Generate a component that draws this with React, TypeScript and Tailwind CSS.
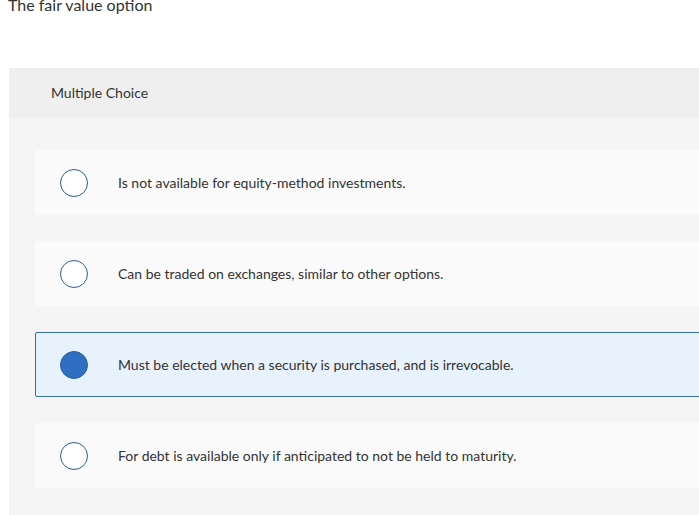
const options = [
  { text: 'Is not available for equity-method investments.', selected: false },
  { text: 'Can be traded on exchanges, similar to other options.', selected: false },
  { text: 'Must be elected when a security is purchased, and is irrevocable.', selected: true },
  { text: 'For debt is available only if anticipated to not be held to maturity.', selected: false },
]

function Radio({ checked }: { checked: boolean }) {
  return (
    <span
      className={
        checked
          ? 'h-[28px] w-[28px] shrink-0 rounded-full border-[1.5px] border-[#2a5f9a] bg-[#2f6fc2]'
          : 'h-[28px] w-[28px] shrink-0 rounded-full border-[1.5px] border-[#2c5d8f] bg-white'
      }
    />
  )
}

export default function App() {
  return (
    <div
      className="h-[515px] w-[699px] overflow-hidden bg-white text-[#333]"
      style={{ fontFamily: 'Lato, "Open Sans", sans-serif' }}
    >
      <h1 className="-mt-[5px] pl-[8px] text-[16px] leading-[20px] font-normal">
        The fair value option
      </h1>

      <div className="ml-[9px] mt-[53px] w-[720px] bg-[#f5f5f5] pb-[30px]">
        <div className="flex h-[50px] items-center bg-[#efefef] pl-[42px] pb-[1px] text-[14px]">
          Multiple Choice
        </div>

        <div className="flex flex-col gap-[26px] pl-[26px] pt-[32px]">
          {options.map((o) => (
            <div
              key={o.text}
              className={
                o.selected
                  ? 'flex h-[65px] w-[700px] items-center rounded-[2px] border border-[#3b6c9e] bg-[#e7f2fc] pl-[24px]'
                  : 'flex h-[65px] w-[700px] items-center rounded-[2px] bg-[#fafafa] pl-[25px]'
              }
            >
              <Radio checked={o.selected} />
              <span className="ml-[30px] pb-[1px] text-[14px]">{o.text}</span>
            </div>
          ))}
        </div>
      </div>
    </div>
  )
}
